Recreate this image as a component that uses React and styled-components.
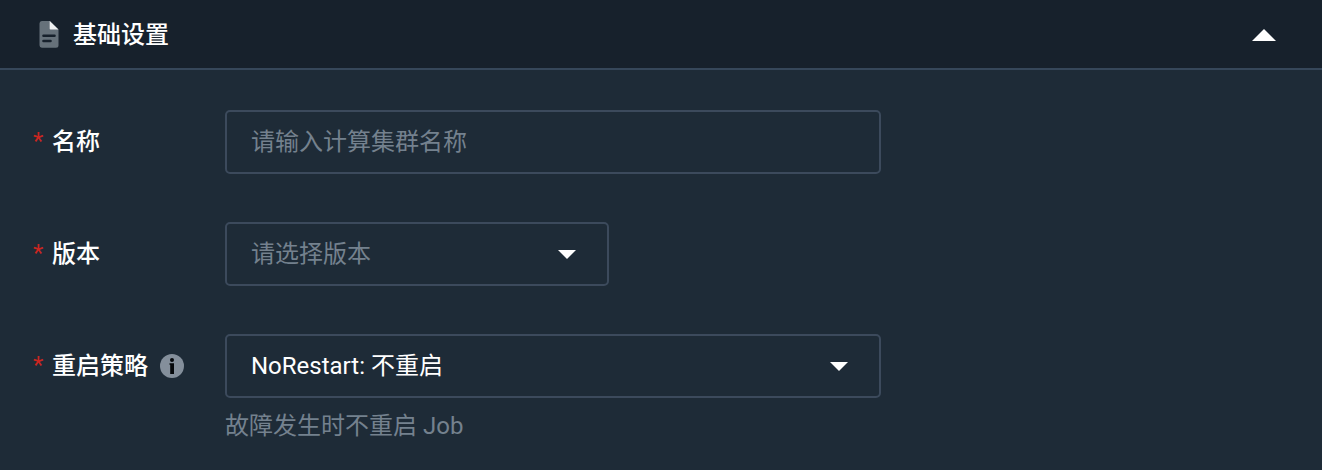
import React from "react";
import styled, { createGlobalStyle } from "styled-components";

const Global = createGlobalStyle`
  * { box-sizing: border-box; }
  body { margin: 0; background: #1e2b37; }
`;
const Panel = styled.main`
  height: 470px;
  overflow: hidden;
  background: #1e2b37;
  color: #fff;
  font: 400 24px/36px Roboto, "Noto Sans CJK SC", sans-serif;
`;
const Header = styled.header`
  height: 70px;
  display: flex;
  align-items: center;
  padding: 1px 46px 0 39px;
  background: #17212c;
  border-bottom: 2px solid #36475a;
`;
const Title = styled.h2`
  flex: 1;
  margin: 0 0 0 14px;
  font-size: 24px;
  font-weight: 500;
`;
const Form = styled.form`
  display: flex;
  flex-direction: column;
  gap: 48px;
  padding: 40px 0 0 33px;
`;
const Row = styled.div`
  display: flex;
  align-items: flex-start;
`;
const Label = styled.div`
  width: 192px;
  height: 64px;
  display: flex;
  align-items: center;
  font-weight: 500;
`;
const Required = styled.span`
  width: 19px;
  padding-bottom: 2px;
  color: #ca2621;
  font-weight: 400;
`;
const LabelText = styled.span`
  margin-right: 12px;
`;
const Field = styled.div`
  width: ${(p) => p.$width}px;
  height: 64px;
  display: flex;
  align-items: center;
  justify-content: space-between;
  padding: 0 30px 0 24px;
  border: 2px solid #3c4a5c;
  border-radius: 5px;
  color: ${(p) => (p.$filled ? "#fff" : "#74818e")};
`;
const Help = styled.div`
  margin-top: 10px;
  color: #74818e;
`;
const Svg = styled.svg`
  display: block;
  flex: none;
`;

const Caret = () => (
  <Svg width="20" height="10" viewBox="0 0 20 10"><path d="M1 1h18L10 10z" fill="#fff" /></Svg>
);

export default function App() {
  return (
    <>
      <Global />
      <Panel>
        <Header>
          <Svg width="20" height="28" viewBox="0 0 20 28">
            <path d="M2.8 0H11l8.5 8.5v15.7a2.5 2.5 0 0 1-2.5 2.5H2.8a2.5 2.5 0 0 1-2.3-2.5V2.5A2.5 2.5 0 0 1 2.8 0z" fill="#66717a" />
            <path d="M10.7 0l8.8 8.6h-8A.8.8 0 0 1 10.7 7.8z" fill="#eef0f2" />
            <path d="M4.5 14.7h11M4.5 20h7" stroke="#17212c" strokeWidth="2.6" strokeLinecap="round" />
          </Svg>
          <Title>基础设置</Title>
          <Svg width="24" height="12" viewBox="0 0 24 12"><path d="M0 12h24L12 0z" fill="#fff" /></Svg>
        </Header>
        <Form>
          <Row>
            <Label><Required>*</Required><LabelText>名称</LabelText></Label>
            <Field $width={656}>请输入计算集群名称</Field>
          </Row>
          <Row>
            <Label><Required>*</Required><LabelText>版本</LabelText></Label>
            <Field $width={384}>请选择版本<Caret /></Field>
          </Row>
          <Row>
            <Label>
              <Required>*</Required><LabelText>重启策略</LabelText>
              <Svg width="24" height="24" viewBox="0 0 24 24">
                <circle cx="12" cy="12" r="12" fill="#848f9b" />
                <circle cx="12" cy="6" r="2" fill="#05080b" />
                <path d="M9.5 9.2H14V20h-3.8v-9.2h-.7z" fill="#05080b" />
              </Svg>
            </Label>
            <div>
              <Field $width={656} $filled>NoRestart: 不重启<Caret /></Field>
              <Help>故障发生时不重启 Job</Help>
            </div>
          </Row>
        </Form>
      </Panel>
    </>
  );
}
